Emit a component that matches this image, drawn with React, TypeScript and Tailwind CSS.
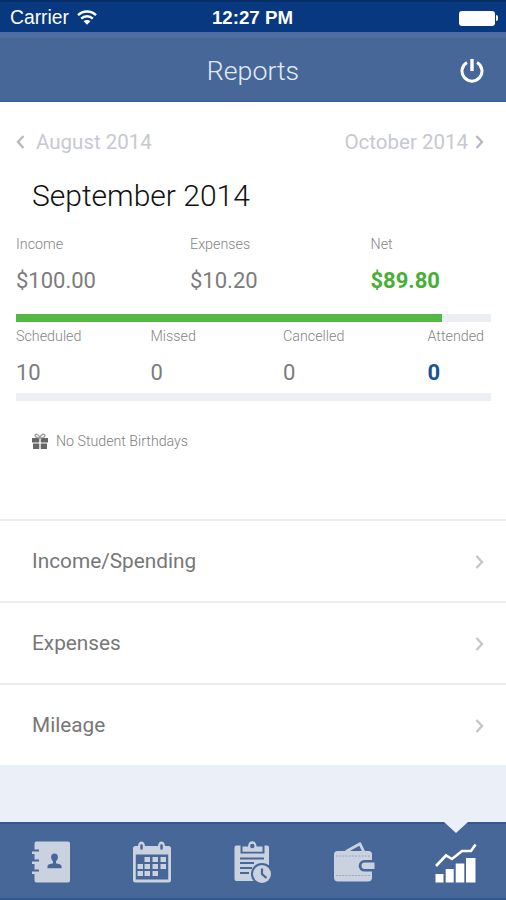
import { clsx } from "clsx";

type Stat = {
  label: string;
  value: string;
  width: string;
  tone?: string;
};

const money: Stat[] = [
  { label: "Income", value: "$100.00", width: "w-[174px]" },
  { label: "Expenses", value: "$10.20", width: "w-[180.5px]" },
  { label: "Net", value: "$89.80", width: "w-[100px]", tone: "font-bold text-[#46b035]" },
];

const lessons: Stat[] = [
  { label: "Scheduled", value: "10", width: "w-[134.5px]" },
  { label: "Missed", value: "0", width: "w-[132.5px]" },
  { label: "Cancelled", value: "0", width: "w-[144.5px]" },
  { label: "Attended", value: "0", width: "w-[64px]", tone: "font-bold text-[#1c5192]" },
];

const links = ["Income/Spending", "Expenses", "Mileage"];

function Chevron({ left, className }: { left?: boolean; className?: string }) {
  return (
    <svg viewBox="0 0 9 14" className={className} fill="none" stroke="currentColor" strokeWidth="2.4">
      <path d={left ? "M7.500 1 2 7l5.500 6" : "M1.500 1 7 7l-5.500 6"} />
    </svg>
  );
}

function WifiIcon() {
  return (
    <svg width="20" height="15" viewBox="0 0 20 15" fill="none" stroke="white" strokeWidth="2.4">
      <path d="M1 5.2a12.8 12.8 0 0 1 18 0" />
      <path d="M4.2 8.6a8.2 8.2 0 0 1 11.6 0" />
      <path d="M10 14.8 6.6 11.300a4.800 4.800 0 0 1 6.800 0z" fill="white" stroke="none" />
    </svg>
  );
}

function GiftIcon() {
  return (
    <svg width="16" height="16" viewBox="0 0 16 16" fill="#666">
      <path d="M0 5h7.300v4.500H0zM8.700 5H16v4.500H8.700zM1 10.500h6.300V16H1zM8.700 10.500H15V16H8.700z" />
      <path d="M7.600 5C6 5 3 4.300 3 2.600 3 .6 6.500.4 7.800 4.500 9.300.4 13 .6 13 2.600 13 4.300 10 5 8.400 5" fill="none" stroke="#999" strokeWidth="1.300" />
    </svg>
  );
}

function ContactsIcon() {
  return (
    <svg width="40" height="42" viewBox="0 0 40 42">
      <path
        fill="currentColor"
        d="M5.500.5h31.500a2 2 0 0 1 2 2v37a2 2 0 0 1-2 2H5.500a2 2 0 0 1-2-2V33H1v-2.500h7v-2H3.500V23H1v-2.500h7v-2H3.500V13H1v-2.500h7v-2H3.500v-6a2 2 0 0 1 2-2z"
      />
      <path
        className="fill-[#466797]"
        d="M23.500 12.500c2.200 0 3.500 1.600 3.400 3.700-.1 1.900-.9 3.200-1.900 4v2.300c2.200.3 5.500.8 5.500 2.800v2h-14v-2c0-2 3.300-2.500 5.500-2.800v-2.300c-1-.8-1.800-2.100-1.900-4-.1-2.100 1.200-3.700 3.400-3.700z"
      />
    </svg>
  );
}

function CalendarIcon() {
  return (
    <svg width="40" height="42" viewBox="0 0 40 42">
      <path
        fill="currentColor"
        fillRule="evenodd"
        d="M3.500 5H6c.3-3 1.500-4.500 3.500-4.500S12.700 2 13 5h13c.3-3 1.500-4.500 3.500-4.500S32.700 2 33 5h3.500A2.500 2.500 0 0 1 39 7.500V39a2.500 2.500 0 0 1-2.500 2.500h-33A2.500 2.500 0 0 1 1 39V7.500A2.500 2.500 0 0 1 3.500 5zm.3 8.500v25h32.400v-25z"
      />
      <path className="stroke-[#466797]" strokeWidth="2.500" strokeLinecap="round" d="M9.500 4.500v3M29.500 4.500v3" />
      <path
        fill="currentColor"
        d="M12.500 16H18v5h-5.500zM20.500 16H26v5h-5.500zM28.500 16H34v5h-5.500zM5.500 23H11v5H5.500zM12.500 23H18v5h-5.500zM20.500 23H26v5h-5.500zM28.500 23H34v5h-5.500zM5.500 30H11v5H5.500zM12.500 30H18v5h-5.500zM20.500 30H26v5h-5.500z"
      />
    </svg>
  );
}

function ClipboardIcon() {
  return (
    <svg width="38" height="42" viewBox="0 0 38 42">
      <path fill="currentColor" d="M2.500 4.500H6.500v8h24v-8H33a2 2 0 0 1 2 2v33.500H2.500a2 2 0 0 1-2-2V6.500a2 2 0 0 1 2-2z" />
      <path
        fill="currentColor"
        fillRule="evenodd"
        d="M8.500 5.500H14C14.300 2 15.800.3 18.300.3S22.300 2 22.600 5.500h5.900v5.300h-20zM18.300 2.800a2.200 2.200 0 1 0 0 4.400 2.200 2.200 0 0 0 0-4.400z"
      />
      <path className="stroke-[#466797]" strokeWidth="2" d="M6 17.500h24M6 22h14M6 27h12M6 32h9" />
      <circle cx="28" cy="33" r="11" className="fill-[#466797]" />
      <circle cx="28" cy="33" r="9" fill="currentColor" />
      <path d="M28 27.500V33l4.500 4" fill="none" className="stroke-[#466797]" strokeWidth="2.200" />
    </svg>
  );
}

function WalletIcon() {
  return (
    <svg width="42" height="40" viewBox="0 0 42 40">
      <path d="M13 9.500 27 1.800l4 8.500" fill="none" stroke="currentColor" strokeWidth="2.800" strokeLinejoin="round" />
      <path fill="currentColor" d="M4.500 9h31a3.500 3.500 0 0 1 3.500 3.500v23a4 4 0 0 1-4 4H5a4 4 0 0 1-4-4v-23A3.500 3.500 0 0 1 4.500 9z" />
      <path d="M3 14h34M3 33.500h34" className="stroke-[#98a8c2]" strokeWidth="1" strokeDasharray="2 1.200" />
      <path d="M42 18H31.500a5.800 5.800 0 0 0 0 11.600H42z" className="fill-[#466797]" />
      <path d="M41.500 20.500H31.800a3.300 3.300 0 0 0 0 6.600h9.700z" fill="currentColor" />
    </svg>
  );
}

function ChartIcon() {
  return (
    <svg width="42" height="40" viewBox="0 0 42 40">
      <path fill="currentColor" d="M.5 31H8.500v8.500H.5zM10.700 26h8v13.500h-8zM20.700 20.500h8.600v19h-8.600zM31 15h9.500v24.500H31z" />
      <path d="M1 23 11 12.500l6 3.500L27 8h9L40.500 1.500" fill="none" stroke="currentColor" strokeWidth="2.600" />
    </svg>
  );
}

function StatRow({ stats }: { stats: Stat[] }) {
  return (
    <div className="flex">
      {stats.map((s) => (
        <div key={s.label} className={clsx("shrink-0", s.width)}>
          <div className="text-[14.3px] leading-4 font-light text-[#858585]">{s.label}</div>
          <div className={clsx("mt-[16px] text-[22px] leading-[26px]", s.tone ?? "text-[#7c7c7c]")}>{s.value}</div>
        </div>
      ))}
    </div>
  );
}

const tabs = [
  { name: "contacts", Icon: ContactsIcon },
  { name: "calendar", Icon: CalendarIcon },
  { name: "tasks", Icon: ClipboardIcon },
  { name: "wallet", Icon: WalletIcon },
  { name: "reports", Icon: ChartIcon },
];

export default function App() {
  const active = "reports";

  return (
    <div className="flex h-[900px] w-[506px] flex-col overflow-hidden bg-[#ebeff7] font-['Roboto',sans-serif]">
      <div className="grid h-8 shrink-0 grid-cols-3 items-center border-t-2 border-[#062f68] bg-[#083880] pr-2 pl-[10px] font-['Liberation_Sans',sans-serif] text-white">
        <div className="flex items-center gap-[8px] pt-0.5 text-[19.3px] leading-none">
          <span>Carrier</span>
          <WifiIcon />
        </div>
        <div className="pt-0.5 pr-[3px] text-center text-[18.7px] leading-none font-bold whitespace-nowrap">12:27 PM</div>
        <div className="flex items-center justify-end gap-px pt-0.5">
          <div className="h-[15px] w-[36px] rounded-[3px] bg-white" />
          <div className="h-[6px] w-[2px] rounded-r bg-white" />
        </div>
      </div>

      <header className="grid h-[70px] shrink-0 grid-cols-[1fr_auto_1fr] items-center border-t-[6px] border-b-2 border-t-[#4d6e9e] border-b-[#3d6196] bg-[#466797] px-[22px] pt-1">
        <div />
        <h1 className="text-[26.7px] leading-9 font-light text-[#e4ecf8]">Reports</h1>
        <button className="justify-self-end text-white" aria-label="Log out">
          <svg width="24" height="26" viewBox="0 0 24 26" fill="none" stroke="currentColor" strokeWidth="3">
            <path d="M12 1v12" strokeWidth="3.400" />
            <path d="M7 4.500a10 10 0 1 0 10 0" />
          </svg>
        </button>
      </header>

      <main className="flex h-[417px] shrink-0 flex-col bg-white px-4 pt-[28px]">
        <div className="flex items-center justify-between pr-[6px] text-[20.5px] leading-6 text-[#c6c9cf]">
          <div className="flex items-center gap-[11px]">
            <Chevron left className="h-[14px] w-[9px] text-[#b7babf]" />
            <span>August 2014</span>
          </div>
          <div className="flex items-center gap-[7px]">
            <span>October 2014</span>
            <Chevron className="h-[14px] w-[9px] text-[#b7babf]" />
          </div>
        </div>

        <h2 className="mt-[23px] mb-[21px] pl-4 text-[30px] leading-[38px] font-light text-[#111]">September 2014</h2>

        <StatRow stats={money} />
        <div className="mt-[20px] mb-[6px] h-2 w-[475px] shrink-0 bg-[#ebeef2]">
          <div className="h-full w-[426px] bg-[#56b844]" />
        </div>
        <StatRow stats={lessons} />
        <div className="mt-[7px] h-2 w-[475px] shrink-0 bg-[#ebeef2]" />

        <div className="mt-[31px] flex items-center gap-2 pl-4 text-[14.2px] leading-[18px] font-light text-[#808080]">
          <GiftIcon />
          <span>No Student Birthdays</span>
        </div>
      </main>

      <nav className="shrink-0">
        {links.map((l) => (
          <a key={l} className="flex h-[82px] items-center justify-between border-t-2 border-[#eaedf2] bg-white pt-0.5 pr-[22px] pl-8 text-[20.8px] text-[#777]">
            <span>{l}</span>
            <Chevron className="h-[14px] w-[9px] text-[#c5c7cc]" />
          </a>
        ))}
      </nav>

      <footer className="relative mt-auto flex h-[78px] shrink-0 items-center border-t-2 border-b-2 border-t-[#37598d] border-b-[#34578b] bg-[#466797]">
        {tabs.map(({ name, Icon }) => (
          <button
            key={name}
            aria-label={name}
            className={clsx("flex w-[101px] justify-center", name === active ? "pt-[3px] pl-[3px] text-white" : "pt-px text-[#c9d2de]")}
          >
            <Icon />
          </button>
        ))}
        <svg className="absolute -top-[2px] left-[444px]" width="24" height="12" viewBox="0 0 24 12">
          <path d="M0 0h24L12 11z" fill="#ebeff7" />
        </svg>
      </footer>
    </div>
  );
}
